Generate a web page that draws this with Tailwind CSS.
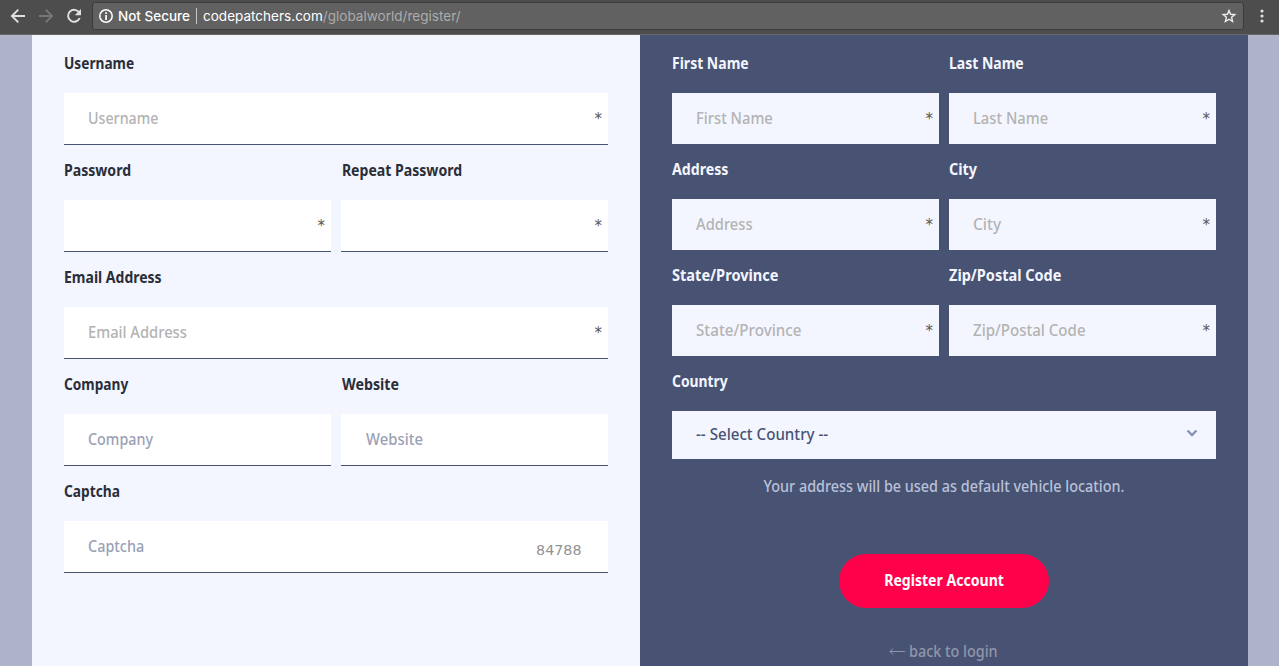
<!DOCTYPE html>
<html lang="en">
<head>
<meta charset="utf-8">
<title>Register</title>
<script src="https://cdn.jsdelivr.net/npm/@tailwindcss/browser@4"></script>
</head>
<body class="h-screen overflow-hidden bg-[#afb3c9] flex flex-col text-base font-['Noto_Sans','Open_Sans',sans-serif] font-medium">
<header class="h-[35px] shrink-0 bg-[#4d4d4d] border-b border-[#686565] flex items-start font-['Inter',sans-serif] font-normal text-[13.5px]">
  <svg class="w-[92px] h-[34px] shrink-0" viewBox="0 0 92 34" fill="none" stroke-width="1.9">
    <path d="M25 16H12M18.3 9.6 11.9 16l6.4 6.4" stroke="#e1e1e1"/>
    <path d="M39 16h13M45.700 9.6 52.1 16l-6.400 6.400" stroke="#777"/>
    <path d="M79.200 12.600A6 6 0 1 0 79.700 18" stroke="#e1e1e1"/>
    <path d="M81 9v6.200h-6.200z" fill="#e1e1e1"/>
  </svg>
  <div class="mt-[2px] w-[1152px] h-[28px] rounded-[3px] border border-[#3b3b3b] bg-[#616161] flex items-center pl-[5px] pr-[6px] text-white">
    <svg class="size-4 shrink-0" viewBox="0 0 16 16"><circle cx="8" cy="8" r="6.200" fill="none" stroke="#fff" stroke-width="1.500"/><path d="M7.200 4.300h1.700v1.700H7.200zM7.200 7h1.700v5H7.200z" fill="#fff"/></svg>
    <span class="ml-1 w-[73px] whitespace-nowrap font-medium">Not Secure</span>
    <span class="ml-[5px] mr-[6px] w-px h-4 bg-[#c8c8c8]"></span>
    <span class="whitespace-nowrap tracking-[0.02px]">codepatchers.com<span class="text-[#acacac]">/globalworld/register/</span></span>
    <svg class="ml-auto size-4 shrink-0" viewBox="0 0 16 16" fill="none" stroke="#ececec" stroke-width="1.400"><path d="M8 2.500 9.600 6.300l4.200.3-3.200 2.700 1 4.100L8 11.200l-3.600 2.200 1-4.100-3.200-2.700 4.200-.3z"/></svg>
  </div>
  <svg class="w-[35px] h-[34px]" viewBox="0 0 35 34" fill="#dedede"><circle cx="18" cy="11" r="1.600"/><circle cx="18" cy="16" r="1.600"/><circle cx="18" cy="21" r="1.600"/></svg>
</header>
<main class="flex-1 min-h-0 flex mx-8 w-[1216px] whitespace-nowrap">
  <section class="w-[608px] bg-[#f3f6ff] px-8 pt-[3px] text-[#2a2e38]">
    <div class="grid grid-cols-2 gap-x-[10px]">
      <label class="col-span-2"><span class="block h-[55px] leading-[50px] font-bold"><span class="inline-block origin-left scale-x-[.855]">Username</span></span>
        <span class="flex justify-between h-[52px] leading-[50px] bg-white border-b border-[#485273] pl-6 pr-[6px] text-[#b3b3b3]"><span class="origin-left scale-x-[.89]">Username</span><span class="text-[#555] font-['DejaVu_Sans'] text-[15px] leading-[53px]">*</span></span></label>
      <label><span class="block h-[55px] leading-[50px] font-bold"><span class="inline-block origin-left scale-x-[.88]">Password</span></span>
        <span class="flex justify-end h-[52px] leading-[50px] bg-white border-b border-[#485273] pr-[6px]"><span class="text-[#555] font-['DejaVu_Sans'] text-[15px] leading-[53px]">*</span></span></label>
      <label><span class="block h-[55px] leading-[50px] font-bold"><span class="inline-block origin-left scale-x-[.88] pl-px">Repeat Password</span></span>
        <span class="flex justify-end h-[52px] leading-[50px] bg-white border-b border-[#485273] pr-[6px]"><span class="text-[#555] font-['DejaVu_Sans'] text-[15px] leading-[53px]">*</span></span></label>
      <label class="col-span-2"><span class="block h-[55px] leading-[50px] font-bold"><span class="inline-block origin-left scale-x-[.875]">Email Address</span></span>
        <span class="flex justify-between h-[52px] leading-[50px] bg-white border-b border-[#485273] pl-6 pr-[6px] text-[#b3b3b3]"><span class="origin-left scale-x-[.92]">Email Address</span><span class="text-[#555] font-['DejaVu_Sans'] text-[15px] leading-[53px]">*</span></span></label>
      <label><span class="block h-[55px] leading-[50px] font-bold"><span class="inline-block origin-left scale-x-[.855]">Company</span></span>
        <span class="flex h-[52px] leading-[50px] bg-white border-b border-[#485273] pl-6 text-[#9ba1b5]"><span class="origin-left scale-x-[.895]">Company</span></span></label>
      <label><span class="block h-[55px] leading-[50px] font-bold"><span class="inline-block origin-left scale-x-[.89] pl-px">Website</span></span>
        <span class="flex h-[52px] leading-[50px] bg-white border-b border-[#485273] pl-[25px] text-[#9ba1b5]"><span class="origin-left scale-x-[.93]">Website</span></span></label>
      <label class="col-span-2"><span class="block h-[55px] leading-[50px] font-bold"><span class="inline-block origin-left scale-x-[.86]">Captcha</span></span>
        <span class="flex justify-between h-[52px] leading-[50px] bg-white border-b border-[#485273] pl-6 pr-[26px] text-[#9ba1b5]"><span class="origin-left scale-x-[.9]">Captcha</span><span class="origin-right scale-x-[1.02] font-['DejaVu_Sans'] font-normal text-[14px] leading-[58px] text-[#929292]">84788</span></span></label>
    </div>
  </section>
  <section class="w-[608px] bg-[#485273] px-8 pt-[3px] text-[#f3f6ff]">
    <div class="grid grid-cols-2 gap-x-[10px]">
      <label><span class="block h-[55px] leading-[50px] font-bold"><span class="inline-block origin-left scale-x-[.875]">First Name</span></span>
        <span class="flex justify-between h-[51px] leading-[50px] bg-[#f3f6ff] pl-6 pr-[6px] text-[#b3b3b3]"><span class="origin-left scale-x-[.92]">First Name</span><span class="text-[#555] font-['DejaVu_Sans'] text-[15px] leading-[53px]">*</span></span></label>
      <label><span class="block h-[55px] leading-[50px] font-bold"><span class="inline-block origin-left scale-x-[.875]">Last Name</span></span>
        <span class="flex justify-between h-[51px] leading-[50px] bg-[#f3f6ff] pl-6 pr-[6px] text-[#b3b3b3]"><span class="origin-left scale-x-[.92]">Last Name</span><span class="text-[#555] font-['DejaVu_Sans'] text-[15px] leading-[53px]">*</span></span></label>
      <label><span class="block h-[55px] leading-[50px] font-bold"><span class="inline-block origin-left scale-x-[.885]">Address</span></span>
        <span class="flex justify-between h-[51px] leading-[50px] bg-[#f3f6ff] pl-6 pr-[6px] text-[#b3b3b3]"><span class="origin-left scale-x-[.92]">Address</span><span class="text-[#555] font-['DejaVu_Sans'] text-[15px] leading-[53px]">*</span></span></label>
      <label><span class="block h-[55px] leading-[50px] font-bold"><span class="inline-block origin-left scale-x-[.9]">City</span></span>
        <span class="flex justify-between h-[51px] leading-[50px] bg-[#f3f6ff] pl-6 pr-[6px] text-[#b3b3b3]"><span class="origin-left scale-x-[.97]">City</span><span class="text-[#555] font-['DejaVu_Sans'] text-[15px] leading-[53px]">*</span></span></label>
      <label><span class="block h-[55px] leading-[50px] font-bold"><span class="inline-block origin-left scale-x-[.91]">State/Province</span></span>
        <span class="flex justify-between h-[51px] leading-[50px] bg-[#f3f6ff] pl-6 pr-[6px] text-[#b3b3b3]"><span class="origin-left scale-x-[.95]">State/Province</span><span class="text-[#555] font-['DejaVu_Sans'] text-[15px] leading-[53px]">*</span></span></label>
      <label><span class="block h-[55px] leading-[50px] font-bold"><span class="inline-block origin-left scale-x-[.905]">Zip/Postal Code</span></span>
        <span class="flex justify-between h-[51px] leading-[50px] bg-[#f3f6ff] pl-6 pr-[6px] text-[#b3b3b3]"><span class="origin-left scale-x-[.94]">Zip/Postal Code</span><span class="text-[#555] font-['DejaVu_Sans'] text-[15px] leading-[53px]">*</span></span></label>
      <label class="col-span-2"><span class="block h-[55px] leading-[50px] font-bold"><span class="inline-block origin-left scale-x-[.865]">Country</span></span>
        <span class="flex justify-between h-[48px] leading-[46px] bg-[#f3f6ff] pl-6 pr-[18px] text-[#485273]"><span class="origin-left scale-x-[.945]">-- Select Country --</span><svg class="mt-[16px] w-3 h-3" viewBox="0 0 12 12" fill="none" stroke="#8792b3" stroke-width="2.400"><path d="M1.500 3.500 6 8l4.500-4.500"/></svg></span></label>
    </div>
    <p class="text-center leading-[54px] text-[#b8c1d8] scale-x-[.9]">Your address will be used as default vehicle location.</p>
    <button class="mx-auto mt-[41px] flex justify-center w-[210px] h-[54px] leading-[52px] rounded-full bg-[#ff004b] text-white font-bold"><span class="scale-x-[.88]">Register Account</span></button>
    <p class="mt-[18px] flex justify-center items-center gap-[4px] leading-[50px] text-[#8f96aa]"><svg class="w-4 h-2 ml-[9px]" viewBox="0 0 16 8" fill="none" stroke="#8f96aa"><path d="M16 4.500H1M4 1.500 1 4.500l3 3"/></svg><span class="origin-left scale-x-[.9]">back to login</span></p>
  </section>
</main>
</body>
</html>
